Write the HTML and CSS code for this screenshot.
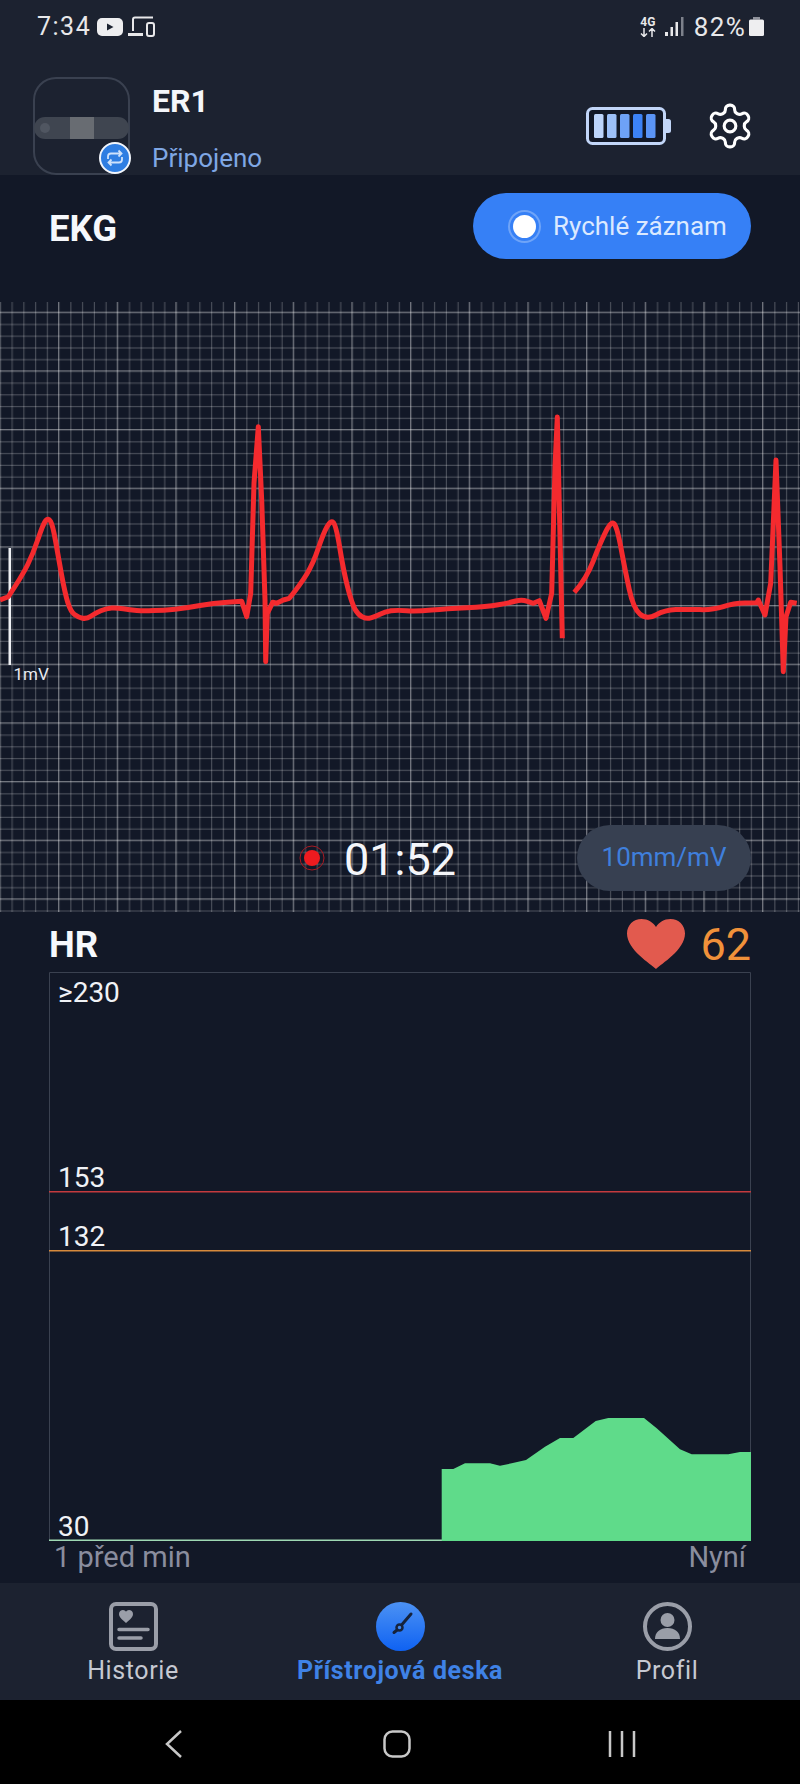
FILE: index.html
```html
<!DOCTYPE html>
<html lang="cs">
<head>
<meta charset="utf-8">
<title>ER1</title>
<link rel="stylesheet" href="styles.css">
</head>
<body>
<div class="app">
  <header class="top">
    <div class="status">
      <div class="status-side">
        <span class="clock">7:34</span>
        <svg class="ic-yt" viewBox="0 0 26 18"><rect width="26" height="18" rx="5" fill="#eeeef0"/><path d="M10 5.500l6.500 3.500-6.500 3.500z" fill="#1c2230"/></svg>
        <svg class="ic-dev" viewBox="0 0 27 21" fill="none" stroke="#e8e8ea" stroke-width="2"><path d="M5 15V3.500Q5 1.500 7 1.500H25"/><path d="M0 18.500H15" stroke-width="3"/><rect x="19" y="7" width="7" height="13" rx="2"/></svg>
      </div>
      <div class="status-side">
        <span class="net"><span class="net-g">4G</span><svg class="ic-arrows" viewBox="0 0 16 9" fill="none" stroke="#e8e8ea" stroke-width="1.500"><path d="M4 0v8M1 5.500l3 3 3-3M12 9V1M9 3.500l3-3 3 3"/></svg></span>
        <svg class="ic-signal" viewBox="0 0 19 19"><rect x="0" y="15" width="3" height="4" fill="#e8e8ea"/><rect x="5.500" y="10" width="2.500" height="9" fill="#e8e8ea"/><rect x="10.500" y="5" width="2.500" height="14" fill="#e8e8ea"/><rect x="16" y="0" width="2.500" height="19" fill="#7d818b"/></svg>
        <span class="pct">82%</span>
        <svg class="ic-batt" viewBox="0 0 15 19"><path d="M4 0h7v2.500H4z" fill="#8e919a"/><rect y="2.500" width="15" height="16.500" rx="1.500" fill="#eeeef0"/></svg>
      </div>
    </div>
    <div class="device">
      <div class="thumb">
        <div class="strap"><span class="strap-dot"></span><span class="strap-mid"></span></div>
        <svg class="badge" viewBox="0 0 32 32" fill="none"><circle cx="16" cy="16" r="15" fill="#2f7ee2" stroke="#f2f6fc" stroke-width="2"/><path d="M9 17v-2.500Q9 11.500 12 11.500H22M19.500 8.500l3 3-3 3M23 15v2.500Q23 20.500 20 20.500H10M12.500 23.500l-3-3 3-3" stroke="#cfe2fb" stroke-width="1.800"/></svg>
      </div>
      <div class="dev-text">
        <div class="dev-name">ER1</div>
        <div class="dev-state">Připojeno</div>
      </div>
      <svg class="ic-power" viewBox="0 0 85 38">
        <rect x="1.500" y="1.500" width="77" height="35" rx="5" fill="#121827" stroke="#c2d6f8" stroke-width="3"/>
        <path d="M80 12h2.500q2.500 0 2.500 2.500v9q0 2.500-2.500 2.500H80z" fill="#c2d6f8"/>
        <rect x="8" y="7" width="9.500" height="24" rx="1.500" fill="#bcd4fb"/>
        <rect x="21" y="7" width="9.500" height="24" rx="1.500" fill="#9cc0f9"/>
        <rect x="34" y="7" width="9.500" height="24" rx="1.500" fill="#6ea2f6"/>
        <rect x="47" y="7" width="9.500" height="24" rx="1.500" fill="#3c82f6"/>
        <rect x="60" y="7" width="9.500" height="24" rx="1.500" fill="#5a94f6"/>
      </svg>
      <svg class="ic-gear" viewBox="0 0 24 24" fill="none" stroke="#fff" stroke-width="1.500" stroke-linejoin="round"><path d="M12.220 2h-.44a2 2 0 0 0-2 2v.18a2 2 0 0 1-1 1.730l-.43.250a2 2 0 0 1-2 0l-.15-.08a2 2 0 0 0-2.730.730l-.22.380a2 2 0 0 0 .730 2.730l.15.100a2 2 0 0 1 1 1.720v.510a2 2 0 0 1-1 1.740l-.15.090a2 2 0 0 0-.73 2.730l.22.380a2 2 0 0 0 2.730.730l.15-.08a2 2 0 0 1 2 0l.43.250a2 2 0 0 1 1 1.730V20a2 2 0 0 0 2 2h.44a2 2 0 0 0 2-2v-.18a2 2 0 0 1 1-1.730l.43-.25a2 2 0 0 1 2 0l.15.080a2 2 0 0 0 2.730-.730l.22-.39a2 2 0 0 0-.73-2.730l-.15-.08a2 2 0 0 1-1-1.740v-.5a2 2 0 0 1 1-1.740l.15-.09a2 2 0 0 0 .73-2.730l-.22-.38a2 2 0 0 0-2.730-.73l-.15.08a2 2 0 0 1-2 0l-.43-.25a2 2 0 0 1-1-1.730V4a2 2 0 0 0-2-2z"/><circle cx="12" cy="12" r="2.800"/></svg>
    </div>
  </header>

  <section class="ekg-head">
    <h1 class="title">EKG</h1>
    <div class="quick"><span class="radio"></span><span>Rychlé záznam</span></div>
  </section>

  <section class="ecg">
    <svg class="ecg-svg" viewBox="0 302 800 610">
      <defs>
        <pattern id="grid" patternUnits="userSpaceOnUse" x="-0.6" y="311.700" width="58.667" height="58.667">
          <g fill="#fff" fill-opacity=".27">
            <rect x="12.300" width="1" height="58.667"/><rect x="24.030" width="1" height="58.667"/><rect x="35.770" width="1" height="58.667"/><rect x="47.500" width="1" height="58.667"/>
            <rect y="12.300" width="58.667" height="1"/><rect y="24.030" width="58.667" height="1"/><rect y="35.770" width="58.667" height="1"/><rect y="47.500" width="58.667" height="1"/>
          </g>
          <g fill="#fff" fill-opacity=".42"><rect x="0" width="1.300" height="58.667"/><rect y="0" width="58.667" height="1.300"/></g>
        </pattern>
      </defs>
      <rect y="302" width="800" height="610" fill="url(#grid)"/>
      <rect x="8.500" y="548" width="2.500" height="117" fill="#eef0f4"/>
      <text class="mv" x="13.500" y="680">1mV</text>
      <g class="trace">
        <path d="M0 600L8.300 596.700Q21.700 576.700 27.500 565Q33.300 553.300 38.300 538.300Q43.300 523.300 45.800 520.500Q48.300 517.700 50.500 521.300Q52.700 525 55.500 540.800Q58.300 556.700 61.600 575Q65 593.300 67.800 602.500Q70.700 611.700 74.500 614.500Q78.300 617.300 82.500 618.200Q86.700 619 90.800 616.200Q95 613.300 100.800 610.800Q106.700 608.300 111.700 608Q116.700 607.700 123.300 608.800Q130 610 136.700 610.500Q143.300 611 153.300 610.600Q163.300 610.300 175 609.200Q186.700 608 200 605.500Q213.300 603 227.500 602.200L241.700 601.300L246.700 616.700L250.700 593.300L254 483.300L258.300 426.700L261.700 500L265 600L265.700 661.700L267.300 613.300L272.700 602.300L276.700 603.300L283.300 600L289.300 598.300Q300 585 306.700 574.200Q313.300 563.300 318.300 548.300Q323.300 533.300 327 526.700Q330.700 520 333.300 522.500Q336 525 339.700 547.500Q343.300 570 347.500 586.700Q351.700 603.300 355 609.200Q358.300 615 362.500 617Q366.700 619 370.800 617.800Q375 616.700 380 614.200Q385 611.700 390.800 610.800Q396.700 610 406.700 610.700Q416.700 611.300 431.700 610Q446.700 608.700 466.700 607.700Q486.700 606.700 498.300 604.700Q510 602.700 515.800 601Q521.700 599.300 527.500 601.300L533.300 603.300L539.300 600.700L546 618.300L551.700 593.300L555 466.700L557.300 417L562.300 638.300"/>
        <path d="M574.300 592.300Q586.700 578.300 593.300 560.800Q600 543.300 605.800 531.600Q611.700 520 614.500 524.200Q617.300 528.300 621.200 549.200Q625 570 629.200 589.200Q633.300 608.300 640 614.200Q646.700 620 655.800 615Q665 610 675.800 609.600Q686.700 609.300 700 609.600Q713.300 610 723.300 606.700Q733.300 603.300 745 603L756.700 602.700L758.300 600L765 615L770.700 583.300L776 460L780 566.700L783.300 671.700L786 616.700L790.700 602.300L796.700 603.300"/>
      </g>
    </svg>
    <div class="ecg-over">
      <div class="rec">
        <svg class="rec-dot" viewBox="0 0 26 26"><circle cx="13" cy="13" r="12" fill="none" stroke="#a81a22" stroke-width="1"/><circle cx="13" cy="13" r="8" fill="#ee1b1f"/></svg>
        <span class="timer">01:52</span>
      </div>
      <div class="scale">10mm/mV</div>
    </div>
  </section>

  <section class="hr-head">
    <h2 class="title">HR</h2>
    <div class="hr-val">
      <svg class="heart" viewBox="0 0 58 50"><path d="M29 50C24 45 0 31 0 14.500 0 6 6.500 0 14.500 0 21 0 26 3.500 29 8 32 3.500 37 0 43.500 0 51.500 0 58 6 58 14.500 58 31 34 45 29 50z" fill="#e25a4e"/></svg>
      <span class="bpm">62</span>
    </div>
  </section>

  <section class="chart">
    <svg class="chart-svg" viewBox="49 972 703 570">
      <path class="frame" d="M49.500 1541V972.500H750.500V1541"/>
      <rect x="49" y="1191" width="702" height="1.500" fill="#c43a3e"/>
      <rect x="49" y="1250" width="702" height="1.500" fill="#d78a3c"/>
      <rect x="49" y="1539.500" width="393" height="1.500" fill="#9fd9b4"/>
      <path d="M441.700 1469H453.300L465 1463.300H490L500 1465.700 511.700 1463.300 526 1460 545 1446.700 560 1438H573.300L595.700 1421 608.300 1418H644L656.700 1428.300 680 1449.300 691.700 1454.300H728.300L740 1452H751V1541H441.700z" fill="#5fdb8a"/>
      <text class="tick" x="58" y="1002">≥230</text>
      <text class="tick" x="58" y="1187">153</text>
      <text class="tick" x="58" y="1246">132</text>
      <text class="tick" x="58" y="1536">30</text>
    </svg>
    <div class="axis"><span>1 před min</span><span>Nyní</span></div>
  </section>

  <nav class="tabs">
    <div class="tab">
      <svg class="tab-ic" viewBox="0 0 49 49"><rect x="2" y="2" width="45" height="45" rx="5" fill="none" stroke="#9a9ea8" stroke-width="4"/><path d="M17 21c-2-2-7-5-7-9 0-2.500 2-4 4-4 1.300 0 2.400.7 3 1.800.6-1.100 1.700-1.800 3-1.800 2 0 4 1.500 4 4 0 4-5 7-7 9z" fill="#9a9ea8"/><path d="M10 27.500H39M10 36H32" stroke="#9a9ea8" stroke-width="3.500" stroke-linecap="round"/></svg>
      <span class="tab-label">Historie</span>
    </div>
    <div class="tab tab-on">
      <svg class="tab-ic" viewBox="0 0 49 49"><defs><linearGradient id="blue" x1="0" y1="0" x2="0" y2="1"><stop offset="0" stop-color="#4c92f4"/><stop offset="1" stop-color="#0f62f2"/></linearGradient></defs><circle cx="24.500" cy="24.500" r="24.500" fill="url(#blue)"/><path d="M35 12L26 22.500" stroke="#16233c" stroke-width="3" stroke-linecap="round"/><path d="M23 26.500L18 30.500" stroke="#16233c" stroke-width="3" stroke-linecap="round"/><circle cx="23.500" cy="25.500" r="3" fill="#3f86f0" stroke="#16233c" stroke-width="2.500"/></svg>
      <span class="tab-label">Přístrojová deska</span>
    </div>
    <div class="tab">
      <svg class="tab-ic" viewBox="0 0 49 49"><circle cx="24.500" cy="24.500" r="22.500" fill="none" stroke="#9a9ea8" stroke-width="4"/><circle cx="24.500" cy="18" r="7" fill="#9a9ea8"/><path d="M12 37c0-7 5-11 12.500-11S37 30 37 37z" fill="#9a9ea8"/></svg>
      <span class="tab-label">Profil</span>
    </div>
  </nav>

  <div class="sysnav">
    <svg class="sys-back" viewBox="0 0 18 28" fill="none" stroke="#c8c8c8" stroke-width="2.500"><path d="M16 1L2 14l14 13"/></svg>
    <svg class="sys-home" viewBox="0 0 28 28" fill="none" stroke="#c8c8c8" stroke-width="2.500"><rect x="1.500" y="1.500" width="25" height="25" rx="8"/></svg>
    <svg class="sys-rec" viewBox="0 0 28 28" fill="none" stroke="#c8c8c8" stroke-width="2.500"><path d="M2 1V27M14 1V27M26 1V27"/></svg>
  </div>
</div>
</body>
</html>
```
FILE: styles.css
```css
* { box-sizing: border-box; }
html, body { margin: 0; padding: 0; background: #121827; }
body { font-family: Roboto, "Noto Sans", sans-serif; color: #fff; }
svg { display: block; }
h1, h2 { margin: 0; }

.app { width: 800px; height: 1784px; display: flex; flex-direction: column; background: #121827; overflow: hidden; }

.top { height: 175px; flex: none; background: #1c2230; }
.status { height: 52px; padding: 1px 36px 0 37px; display: flex; justify-content: space-between; align-items: center; color: #e8e8ea; }
.status-side { display: flex; align-items: center; }
.clock { font-size: 25px; line-height: 50px; letter-spacing: 1.500px; }
.ic-yt { width: 26px; height: 18px; margin-left: 6px; }
.ic-dev { width: 27px; height: 21px; margin-left: 5px; }
.net { display: flex; flex-direction: column; align-items: center; width: 16px; }
.net-g { font-size: 12px; line-height: 11px; font-weight: 700; color: #e8e8ea; }
.ic-arrows { width: 16px; height: 9px; }
.ic-signal { width: 19px; height: 19px; margin-left: 9px; }
.pct { font-size: 26px; margin-left: 10px; letter-spacing: 1.300px; }
.ic-batt { width: 15px; height: 19px; margin-left: 3px; }

.device { display: flex; align-items: flex-start; margin-top: 25px; padding: 0 49px 0 33px; }
.thumb { width: 97px; height: 98px; flex: none; border: 2px solid #3a4150; border-radius: 23px; position: relative; display: flex; align-items: center; }
.strap { width: 95px; height: 22px; margin: 3px -1px 0; background: #3f4550; border-radius: 11px; display: flex; align-items: center; padding-left: 6px; position: relative; }
.strap-dot { width: 10px; height: 10px; border-radius: 50%; background: #505661; }
.strap-mid { width: 24px; height: 22px; margin-left: 20px; background: #686c72; }
.badge { position: absolute; right: -3px; bottom: -1px; width: 32px; height: 32px; }
.dev-text { margin-left: 22px; flex: 1; }
.dev-name { font-size: 32px; font-weight: 700; line-height: 38px; margin-top: 5px; color: #f4f6fa; }
.dev-state { font-size: 26px; line-height: 30px; margin-top: 23px; color: #7fa7e4; }
.ic-power { width: 85px; height: 38px; margin-top: 30px; }
.ic-gear { width: 50px; height: 50px; margin: 24px -4px 0 34px; }

.ekg-head { height: 127px; flex: none; padding: 18px 49px 0; display: flex; justify-content: space-between; align-items: flex-start; }
.title { font-size: 36.500px; font-weight: 700; line-height: 66px; margin-top: 3px; color: #f6f8fc; }
.quick { width: 278px; height: 66px; border-radius: 33px; background: #3680f6; display: flex; align-items: center; padding-left: 40px; font-size: 26px; color: #dbe9ff; }
.radio { width: 23px; height: 23px; border-radius: 50%; background: #fff; box-shadow: 0 0 0 3px #3680f6, 0 0 0 5px #6fa4f8; margin-right: 17px; }

.ecg { height: 610px; flex: none; position: relative; }
.ecg-svg { width: 800px; height: 610px; }
.trace path { fill: none; stroke: #f42a2e; stroke-width: 5; stroke-linejoin: round; }
.mv { font-size: 17px; fill: #e8eaf0; font-family: Roboto, sans-serif; }
.ecg-over { position: absolute; left: 0; right: 49px; top: 523px; height: 66px; display: flex; justify-content: flex-end; align-items: center; gap: 121px; }
.rec { display: flex; align-items: center; gap: 19px; }
.rec-dot { width: 26px; height: 26px; }
.timer { font-size: 45px; line-height: 66px; margin-top: 4px; color: #f4f6fa; }
.scale { width: 174px; height: 66px; border-radius: 33px; background: #374051; display: flex; align-items: center; justify-content: center; font-size: 26px; padding-bottom: 2px; color: #3f7fdc; }

.hr-head { height: 60px; flex: none; padding: 0 49px; display: flex; justify-content: space-between; align-items: center; }
.hr-head .title { line-height: 60px; margin-top: 6px; }
.hr-val { display: flex; align-items: center; gap: 15px; }
.heart { width: 58px; height: 50px; margin-top: 4px; }
.bpm { font-size: 45px; line-height: 60px; margin-top: 6px; color: #f0913a; }

.chart { height: 611px; flex: none; }
.chart-svg { width: 703px; height: 570px; margin-left: 49px; }
.frame { fill: none; stroke: #3a4150; stroke-width: 1; }
.tick { font-family: Roboto, sans-serif; font-size: 28px; fill: #f0f2f6; }
.axis { display: flex; justify-content: space-between; padding: 0 54px; font-size: 29px; line-height: 30px; color: #8a8d9e; }

.tabs { height: 117px; flex: none; background: #1c2230; display: flex; padding: 19px 0 0; }
.tab { display: flex; flex-direction: column; align-items: center; }
.tab:nth-child(1) { width: 266px; }
.tab:nth-child(2) { width: 268px; }
.tab:nth-child(3) { width: 266px; }
.tab-ic { width: 49px; height: 49px; }
.tab-label { font-size: 25px; line-height: 30px; margin-top: 5px; color: #c6c9d2; letter-spacing: .6px; }
.tab-on .tab-label { font-weight: 700; color: #3f82e6; }

.sysnav { flex: 1; background: #000; display: flex; align-items: flex-start; padding-top: 30px; }
.sys-back { width: 18px; height: 28px; margin-left: 165px; }
.sys-home { width: 28px; height: 28px; margin-left: 200px; }
.sys-rec { width: 28px; height: 28px; margin-left: 197px; }
```
